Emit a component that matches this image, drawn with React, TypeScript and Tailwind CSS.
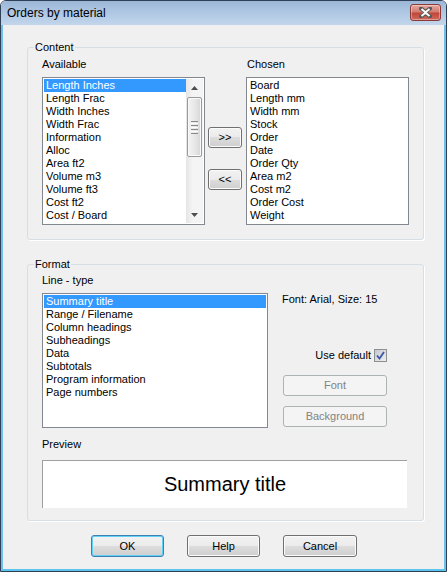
import React from "react";

const FONT = "font-['Liberation_Sans',Arial,sans-serif]";

type BtnProps = {
  label: string;
  className?: string;
  disabled?: boolean;
  focused?: boolean;
};

function Button({ label, className = "", disabled, focused }: BtnProps) {
  let look =
    "border-[#707070] bg-[linear-gradient(to_bottom,#f2f2f2_0%,#ebebeb_50%,#dddddd_50%,#cfcfcf_100%)] shadow-[inset_0_0_0_1px_#fbfbfb] text-black";
  if (disabled) look = "border-[#adb2b5] bg-[#f4f4f4] text-[#838383]";
  if (focused)
    look =
      "border-[#3c7fb1] bg-[linear-gradient(to_bottom,#f2f2f2_0%,#ebebeb_50%,#dddddd_50%,#cfcfcf_100%)] shadow-[inset_0_0_0_1px_#63d0f6] text-black";
  return (
    <div
      className={`flex shrink-0 items-center justify-center rounded-[3px] border text-[11px] leading-[13px] ${look} ${className}`}
    >
      {label}
    </div>
  );
}

function Item({ text, selected }: { text: string; selected?: boolean }) {
  return (
    <div
      className={`h-[13px] pl-[2px] text-[11px] leading-[13px] whitespace-nowrap ${
        selected ? "bg-[#3399ff] text-white" : "text-black"
      }`}
    >
      {text}
    </div>
  );
}

function Arrow({ up }: { up?: boolean }) {
  return (
    <svg width="7" height="4" viewBox="0 0 7 4">
      {up ? (
        <polygon points="0,4 7,4 3.5,0" fill="#4d4d4d" />
      ) : (
        <polygon points="0,0 7,0 3.5,4" fill="#4d4d4d" />
      )}
    </svg>
  );
}

function ScrollBar() {
  return (
    <div className="flex w-[17px] shrink-0 flex-col bg-[linear-gradient(to_right,#e5e5e5,#f4f4f4_40%,#f4f4f4)]">
      <div className="flex h-[17px] items-center justify-center">
        <Arrow up />
      </div>
      <div className="flex-1 px-[1px] pt-[1px]">
        <div className="flex h-[60px] flex-col items-center justify-center gap-[1px] rounded-[2px] border border-[#9a9a9a] bg-[linear-gradient(to_right,#f3f3f3,#e8e8e8_50%,#d6d6d6)] shadow-[inset_0_0_0_1px_#fafafa]">
          <div className="h-[1px] w-[7px] bg-[#8a8a8a]" />
          <div className="h-[1px] w-[7px] bg-white" />
          <div className="h-[1px] w-[7px] bg-[#8a8a8a]" />
          <div className="h-[1px] w-[7px] bg-white" />
          <div className="h-[1px] w-[7px] bg-[#8a8a8a]" />
          <div className="h-[1px] w-[7px] bg-white" />
          <div className="h-[1px] w-[7px] bg-[#8a8a8a]" />
        </div>
      </div>
      <div className="flex h-[17px] items-center justify-center">
        <Arrow />
      </div>
    </div>
  );
}

function Group({
  label,
  className = "",
  children,
}: {
  label: string;
  className?: string;
  children: React.ReactNode;
}) {
  return (
    <div
      className={`relative rounded-[3px] border border-[#d5dfe5] shadow-[1px_1px_0_#ffffff] ${className}`}
    >
      <div className="absolute -top-[7px] left-[6px] bg-[#f0f0f0] px-[1px] text-[11px] leading-[13px]">
        {label}
      </div>
      {children}
    </div>
  );
}

const available = [
  "Length Inches",
  "Length Frac",
  "Width Inches",
  "Width Frac",
  "Information",
  "Alloc",
  "Area ft2",
  "Volume m3",
  "Volume ft3",
  "Cost ft2",
  "Cost / Board",
];

const chosen = [
  "Board",
  "Length mm",
  "Width mm",
  "Stock",
  "Order",
  "Date",
  "Order Qty",
  "Area m2",
  "Cost m2",
  "Order Cost",
  "Weight",
];

const lineTypes = [
  "Summary title",
  "Range / Filename",
  "Column headings",
  "Subheadings",
  "Data",
  "Subtotals",
  "Program information",
  "Page numbers",
];

export default function App() {
  return (
    <div className={`${FONT} h-[572px] w-[447px] text-black`}>
      <div className="flex h-full w-full flex-col overflow-hidden rounded-t-[6px] border border-[#2f3f56]">
        {/* Title bar */}
        <div className="flex h-[24px] shrink-0 items-center justify-between bg-[linear-gradient(to_bottom,#9cb7d7,#b3cbe6_60%,#c2d5eb)] pl-[6px] pr-[5px]">
          <span className="text-[12px] leading-[24px] text-black">Orders by material</span>
          <div className="mt-[-2px] flex h-[17px] w-[31px] items-center justify-center rounded-[3px] border border-[#8b3a35] bg-[linear-gradient(to_bottom,#e6a79f_0%,#d27d72_45%,#c0483b_55%,#cf6a5d_100%)] shadow-[inset_0_0_0_1px_rgba(255,255,255,0.35)]">
            <svg width="13" height="11" viewBox="0 0 13 11">
              <path
                d="M2 1.5 L6.5 5 L11 1.5 M2 9.5 L6.5 6 L11 9.5"
                stroke="#5a5a5a"
                strokeWidth="4"
                fill="none"
                strokeLinecap="square"
              />
              <path
                d="M2.5 2 L6.5 5.2 L10.5 2 M2.5 9 L6.5 5.8 L10.5 9"
                stroke="#ffffff"
                strokeWidth="2"
                fill="none"
              />
            </svg>
          </div>
        </div>

        {/* Client area */}
        <div className="flex flex-1 flex-col border-x-2 border-b-2 border-x-[#6fbfe8] border-b-[#5cc4ee] bg-[#f0f0f0]">
          {/* Content group */}
          <Group label="Content" className="ml-[24px] mt-[22px] h-[193px] w-[397px]">
            <div className="flex pl-[14px] pt-[10px]">
              <div className="flex flex-col">
                <div className="h-[13px] text-[11px] leading-[13px]">Available</div>
                <div className="mt-[6px] flex h-[148px] w-[163px] border border-[#828790] bg-white p-[1px]">
                  <div className="flex-1">
                    {available.map((t, i) => (
                      <Item key={t} text={t} selected={i === 0} />
                    ))}
                  </div>
                  <ScrollBar />
                </div>
              </div>
              <div className="ml-[3px] flex flex-col pt-[69px]">
                <Button label=">>" className="h-[21px] w-[34px]" />
                <Button label="<<" className="mt-[21px] h-[21px] w-[34px]" />
              </div>
              <div className="ml-[4px] flex flex-col">
                <div className="ml-[1px] h-[13px] text-[11px] leading-[13px]">Chosen</div>
                <div className="mt-[6px] h-[148px] w-[163px] border border-[#828790] bg-white p-[1px]">
                  {chosen.map((t) => (
                    <Item key={t} text={t} />
                  ))}
                </div>
              </div>
            </div>
          </Group>

          {/* Format group */}
          <Group label="Format" className="ml-[24px] mt-[24px] h-[257px] w-[397px]">
            <div className="flex flex-col pl-[14px] pt-[9px]">
              <div className="h-[13px] text-[11px] leading-[13px]">Line - type</div>
              <div className="mt-[6px] flex">
                <div className="h-[135px] w-[226px] border border-[#828790] bg-white p-[1px]">
                  {lineTypes.map((t, i) => (
                    <Item key={t} text={t} selected={i === 0} />
                  ))}
                </div>
                <div className="ml-[14px] flex w-[105px] flex-col">
                  <div className="h-[13px] text-[11px] leading-[13px] whitespace-nowrap">
                    Font: Arial, Size: 15
                  </div>
                  <div className="mt-[43px] flex items-center justify-end">
                    <span className="text-[11px] leading-[13px]">Use default</span>
                    <div className="ml-[3px] flex h-[13px] w-[13px] items-center justify-center border border-[#8e8f8f] bg-[linear-gradient(135deg,#c4c9d0,#eeeeee)]">
                      <svg width="9" height="9" viewBox="0 0 9 9">
                        <path
                          d="M1 4.5 L3.5 7.5 L8 1"
                          stroke="#3c55a5"
                          strokeWidth="1.8"
                          fill="none"
                        />
                      </svg>
                    </div>
                  </div>
                  <Button label="Font" disabled className="ml-[1px] mt-[13px] h-[21px] w-[104px]" />
                  <Button label="Background" disabled className="ml-[1px] mt-[10px] h-[21px] w-[104px]" />
                </div>
              </div>
              <div className="mt-[10px] h-[13px] text-[11px] leading-[13px]">Preview</div>
              <div className="mt-[9px] flex h-[48px] w-[365px] items-center justify-center border-l border-t border-l-[#a0a0a0] border-t-[#a0a0a0] bg-white">
                <span className="text-[20px] leading-[23px]">Summary title</span>
              </div>
            </div>
          </Group>

          {/* Bottom buttons */}
          <div className="ml-[88px] mt-[14px] flex gap-[23px]">
            <Button label="OK" focused className="h-[22px] w-[73px]" />
            <Button label="Help" className="h-[22px] w-[73px]" />
            <Button label="Cancel" className="h-[22px] w-[74px]" />
          </div>
        </div>
      </div>
    </div>
  );
}
